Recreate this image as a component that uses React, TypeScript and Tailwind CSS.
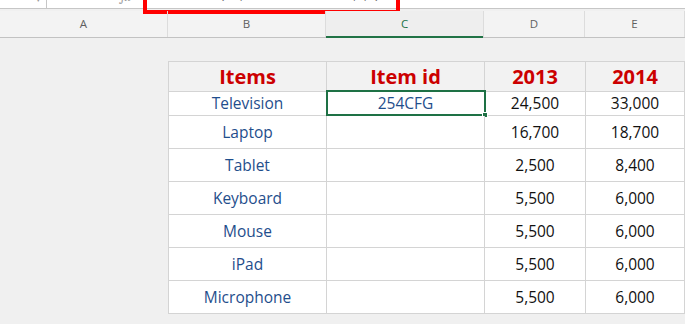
import React from "react";

const rows = [
  { item: "Television", id: "254CFG", y13: "24,500", y14: "33,000", h: "h-[24px]" },
  { item: "Laptop", id: "", y13: "16,700", y14: "18,700", h: "h-[33px]" },
  { item: "Tablet", id: "", y13: "2,500", y14: "8,400", h: "h-[33px]" },
  { item: "Keyboard", id: "", y13: "5,500", y14: "6,000", h: "h-[33px]" },
  { item: "Mouse", id: "", y13: "5,500", y14: "6,000", h: "h-[33px]" },
  { item: "iPad", id: "", y13: "5,500", y14: "6,000", h: "h-[33px]" },
  { item: "Microphone", id: "", y13: "5,500", y14: "6,000", h: "h-[33px]" },
];

const cols = [
  { letter: "A", w: "w-[168px]", active: false },
  { letter: "B", w: "w-[158px]", active: false },
  { letter: "C", w: "w-[158px]", active: true },
  { letter: "D", w: "w-[101px]", active: false },
  { letter: "E", w: "flex-1", active: false },
];

const cell = "flex items-center justify-center pt-px bg-white border-r border-b border-[#d4d4d4] text-[15.5px]";

export default function App() {
  const font = { fontFamily: '"Open Sans", "Noto Sans", sans-serif' };
  return (
    <div className="relative w-[685px] h-[324px] overflow-hidden bg-[#f0f0f0]" style={font}>
      {/* formula bar, scrolled so only its lower edge shows */}
      <div className="flex items-start h-[9px] bg-white border-b border-[#c6c6c6] overflow-hidden text-[#9a9a9a] leading-none">
        <div className="w-[47px] h-full flex justify-end pr-[5px] border-r border-[#c6c6c6]">
          <span className="-mt-[6px] text-[9px]">▾</span>
        </div>
        <div className="w-[96px] flex items-start gap-[8px] pl-[12px]">
          <span className="-mt-[11px] text-[13px]">✕</span>
          <span className="-mt-[11px] text-[13px]">✓</span>
          <span className="ml-[24px] -mt-[10px] text-[13px] italic font-serif">fx</span>
        </div>
        <div className="flex-1 pl-[10px]">
          <span className="block -mt-[12px] whitespace-nowrap text-[13px] text-[#6a6a6a]">
            =VLOOKUP(B3,Sheet2!$A$2:$B$8,2,0)
          </span>
        </div>
      </div>

      {/* highlighted formula */}
      <div className="absolute left-[143px] -top-[4px] w-[257px] h-[18px] border-4 border-[#ff0000]" />

      {/* column headers */}
      <div className="mt-[2px] flex h-[27px] bg-[#f3f3f3] border-b border-[#c2c2c2]">
        {cols.map((c) => (
          <div
            key={c.letter}
            className={`${c.w} relative flex items-center justify-center border-r border-[#dcdcdc] text-[11.5px] ${
              c.active ? "text-[#217346] bg-[#eeeeee]" : "text-[#5f5f5f]"
            }`}
          >
            {c.letter}
            {c.active && <div className="absolute left-0 right-0 -bottom-px h-[2px] bg-[#217346]" />}
          </div>
        ))}
      </div>

      {/* sheet body */}
      <div className="flex pt-[23px]">
        <div className="w-[168px] shrink-0" />
        <div className="flex-1 grid grid-cols-[158px_158px_101px_1fr] border-t border-l border-[#d4d4d4]">
          {["Items", "Item id", "2013", "2014"].map((t) => (
            <div
              key={t}
              className="h-[30px] flex items-center justify-center bg-[#f2f2f2] border-r border-b border-[#d4d4d4] text-[20px] font-bold text-[#cc0000]"
            >
              {t}
            </div>
          ))}
          {rows.map((r, i) => (
            <React.Fragment key={r.item}>
              <div className={`${r.h} ${cell} text-[#1f4e8c]`}>{r.item}</div>
              <div className={`${r.h} ${cell} relative text-[#1f4e8c]`}>
                {r.id}
                {i === 0 && (
                  <>
                    <div className="absolute -left-[1px] -top-[2px] -right-[2px] -bottom-[1px] border-2 border-[#1e7145]" />
                    <div className="absolute -right-[4px] -bottom-[3px] w-[6px] h-[6px] bg-[#1e7145] border border-white" />
                  </>
                )}
              </div>
              <div className={`${r.h} ${cell} text-[#111]`}>{r.y13}</div>
              <div className={`${r.h} ${cell} text-[#111]`}>{r.y14}</div>
            </React.Fragment>
          ))}
        </div>
      </div>
    </div>
  );
}
